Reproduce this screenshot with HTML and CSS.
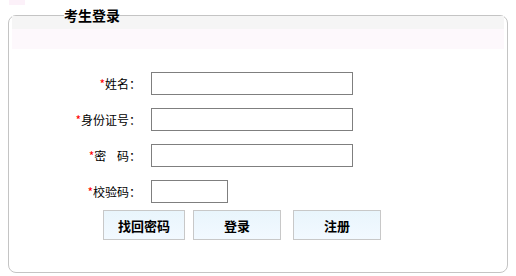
FILE: index.html
```html
<!DOCTYPE html>
<html lang="zh-CN">
<head>
  <meta charset="UTF-8" />
  <title>考生登录</title>
  <link rel="stylesheet" href="styles.css">
</head>
<body>
  <div class="top-mark"></div>

  <fieldset class="login-box">
    <legend class="login-title">考生登录</legend>
    <div class="band-gray"></div>
    <div class="band-pink"></div>

    <form class="login-form" onsubmit="return false">
      <label class="field-label" for="xm"><span class="req">*</span>姓名：</label>
      <input class="field-input" type="text" id="xm" />

      <label class="field-label" for="sfz"><span class="req">*</span>身份证号：</label>
      <input class="field-input" type="text" id="sfz" />

      <label class="field-label" for="mm"><span class="req">*</span>密&nbsp;&nbsp;&nbsp;&nbsp;码：</label>
      <input class="field-input" type="password" id="mm" />

      <label class="field-label" for="yzm"><span class="req">*</span>校验码：</label>
      <input class="field-input short" type="text" id="yzm" />
    </form>

    <div class="btn-row">
      <button class="btn btn-find" type="button">找回密码</button>
      <button class="btn btn-login" type="button">登录</button>
      <button class="btn btn-reg" type="button">注册</button>
    </div>
  </fieldset>
</body>
</html>
```

FILE: styles.css
```css
body {
  margin: 0;
  font-family: "Noto Sans CJK SC", "DejaVu Sans", sans-serif;
  font-size: 12px;
  color: #000;
  background: #fff;
}

.top-mark {
  width: 16px;
  height: 5px;
  margin-left: 9px;
  background: #fcf1f9;
}

.login-box {
  margin: 2px 8px 0 8px;
  padding: 0 3px 32px 3px;
  border: 1px solid #c4c4c4;
  border-radius: 8px;
  min-width: 0;
}

.login-title {
  margin-left: 52px;
  padding: 0;
  font-size: 14px;
  font-weight: bold;
  line-height: 16px;
}

/* the legend pushes content down; pull the bands back up to the border */
.band-gray {
  height: 13px;
  margin-top: -7px;
  background: #f5f5f5;
}

.band-pink {
  height: 20px;
  background: #fdf8fc;
}

.login-form {
  display: grid;
  grid-template-columns: 129px auto;
  column-gap: 10px;
  row-gap: 13px;
  margin-top: 23px;
  justify-items: start;
  align-items: center;
}

.field-label {
  justify-self: end;
  line-height: 23px;
  white-space: nowrap;
}

.req {
  color: #ff0000;
}

.field-input {
  box-sizing: border-box;
  width: 202px;
  height: 23px;
  margin: 0;
  padding: 2px 4px;
  border: 1px solid #7f7f7f;
  font-size: 12px;
}

.field-input.short {
  width: 77px;
}

.btn-row {
  display: flex;
  margin-top: 7px;
  padding-left: 91px;
}

.btn {
  box-sizing: border-box;
  height: 30px;
  padding: 0;
  border: 1px solid #c8c8c8;
  background: linear-gradient(#e9f5fc, #f2f9ff);
  font-family: "Noto Sans CJK SC", sans-serif;
  font-size: 13px;
  font-weight: bold;
  color: #000;
  cursor: pointer;
}

.btn-find {
  width: 82px;
}

.btn-login {
  width: 88px;
  margin-left: 8px;
}

.btn-reg {
  width: 88px;
  margin-left: 12px;
}
```
